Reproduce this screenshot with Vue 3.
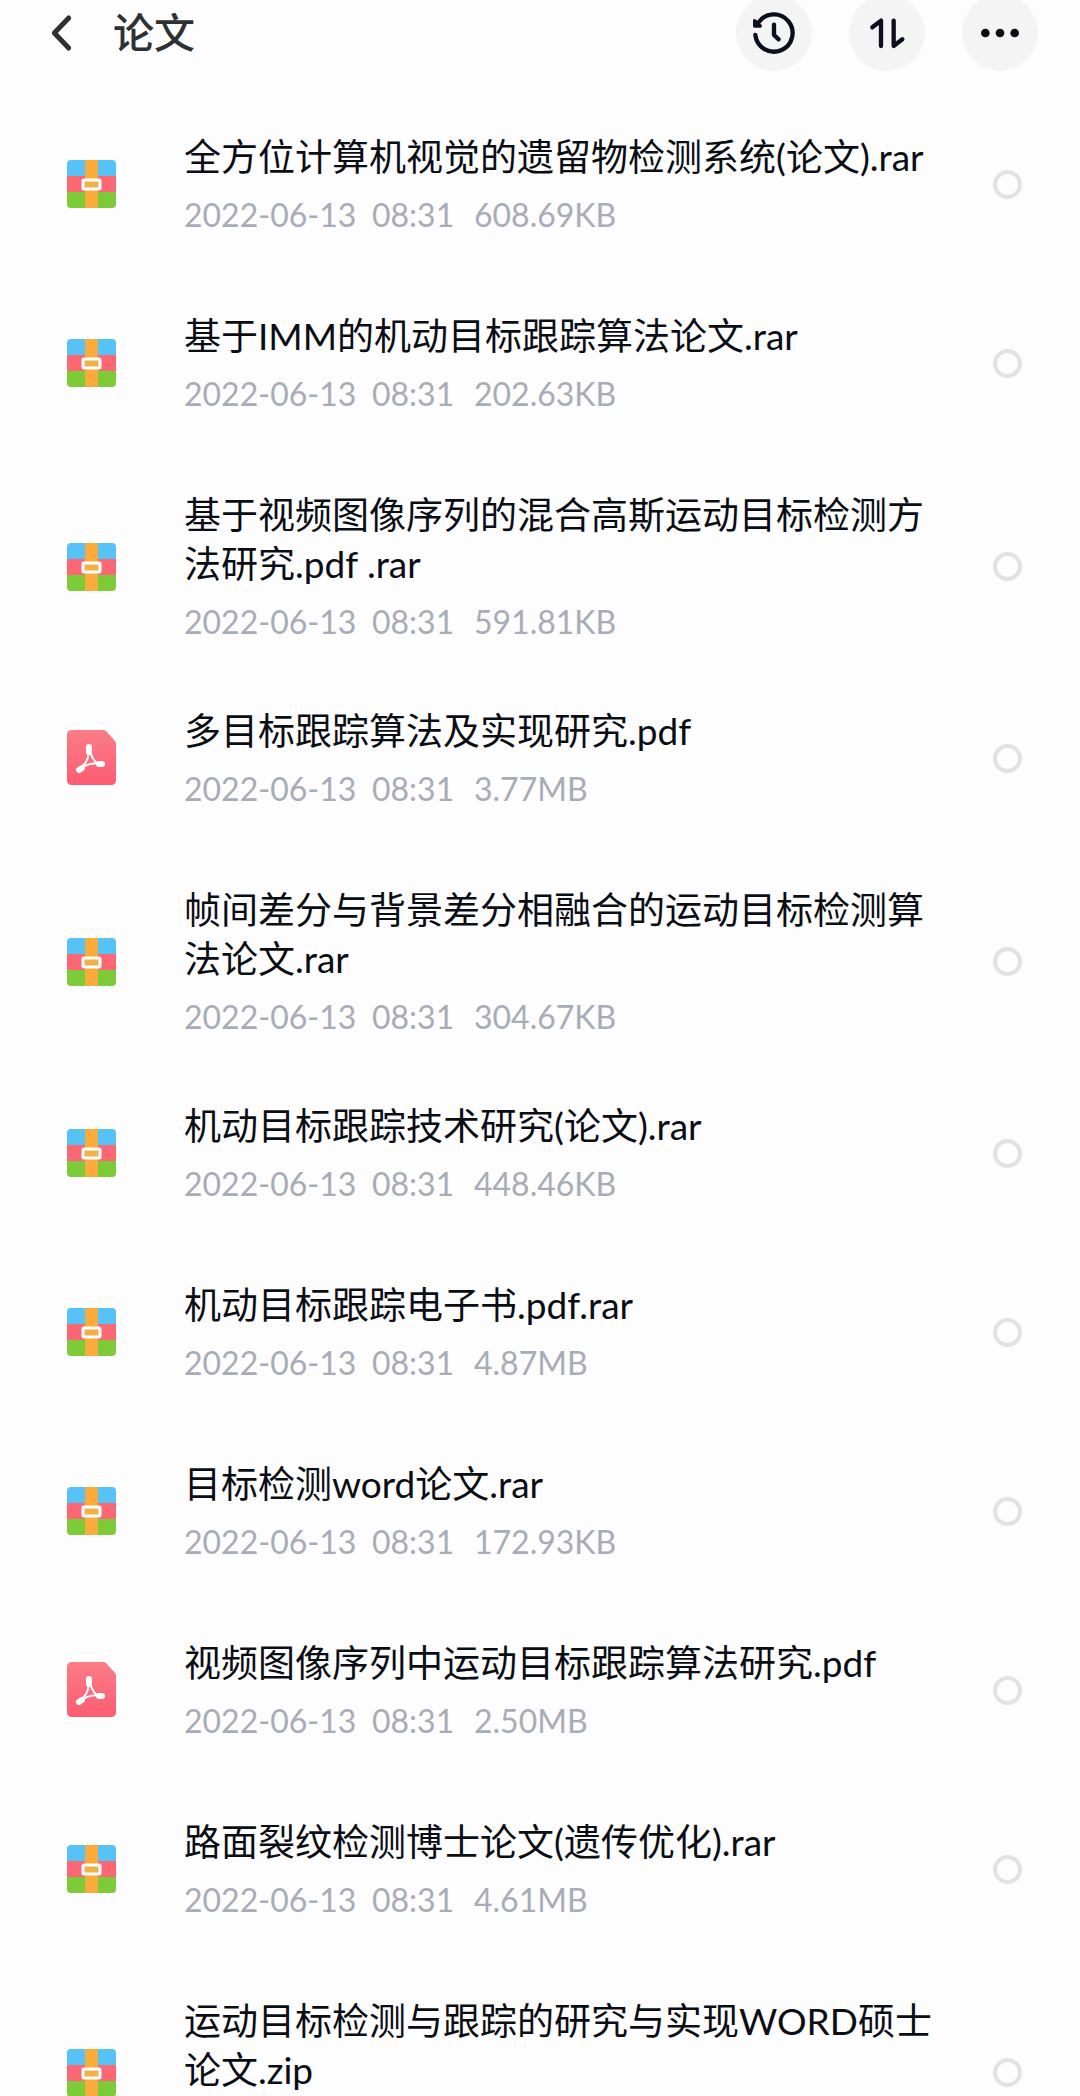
<script setup>
import { ref } from 'vue'

const files = [
  { name: '全方位计算机视觉的遗留物检测系统(论文).rar', type: 'archive', date: '2022-06-13', time: '08:31', size: '608.69KB' },
  { name: '基于IMM的机动目标跟踪算法论文.rar', type: 'archive', date: '2022-06-13', time: '08:31', size: '202.63KB' },
  { name: '基于视频图像序列的混合高斯运动目标检测方法研究.pdf .rar', type: 'archive', date: '2022-06-13', time: '08:31', size: '591.81KB' },
  { name: '多目标跟踪算法及实现研究.pdf', type: 'pdf', date: '2022-06-13', time: '08:31', size: '3.77MB' },
  { name: '帧间差分与背景差分相融合的运动目标检测算法论文.rar', type: 'archive', date: '2022-06-13', time: '08:31', size: '304.67KB' },
  { name: '机动目标跟踪技术研究(论文).rar', type: 'archive', date: '2022-06-13', time: '08:31', size: '448.46KB' },
  { name: '机动目标跟踪电子书.pdf.rar', type: 'archive', date: '2022-06-13', time: '08:31', size: '4.87MB' },
  { name: '目标检测word论文.rar', type: 'archive', date: '2022-06-13', time: '08:31', size: '172.93KB' },
  { name: '视频图像序列中运动目标跟踪算法研究.pdf', type: 'pdf', date: '2022-06-13', time: '08:31', size: '2.50MB' },
  { name: '路面裂纹检测博士论文(遗传优化).rar', type: 'archive', date: '2022-06-13', time: '08:31', size: '4.61MB' },
  { name: '运动目标检测与跟踪的研究与实现WORD硕士论文.zip', type: 'archive', date: '', time: '', size: '' },
]
const selected = ref([])
</script>

<template>
  <div class="screen">
    <header class="bar">
      <button class="back" type="button" aria-label="返回">
        <svg viewBox="150 39 72 120" width="24" height="40" fill="none" stroke="#2f3033" stroke-width="15" stroke-linecap="round" stroke-linejoin="round">
          <path d="M206 54 163 99l43 45" />
        </svg>
      </button>
      <h1>论文</h1>
      <div class="actions">
        <button class="round" type="button" aria-label="历史">
          <svg viewBox="48 -15 228 228" fill="none" stroke="#0c0f1c" stroke-width="13" stroke-linecap="round" stroke-linejoin="round">
            <path d="M106 105A56 56 0 1 0 115 68" />
            <path d="M104 62v16h17z" stroke-width="10" fill="#0c0f1c" />
            <path d="M162 74v31l14 13" />
          </svg>
        </button>
        <button class="round" type="button" aria-label="排序">
          <svg viewBox="386 -15 228 228" fill="none" stroke="#0c0f1c" stroke-width="13" stroke-linecap="round" stroke-linejoin="round">
            <path d="M456 82l26-20v76M520 62v76l26-20" />
          </svg>
        </button>
        <button class="round" type="button" aria-label="更多">
          <svg viewBox="728 -15 228 228" fill="#0c0d12">
            <circle cx="798" cy="99" r="13" />
            <circle cx="842" cy="99" r="13" />
            <circle cx="886" cy="99" r="13" />
          </svg>
        </button>
      </div>
    </header>

    <ul class="list">
      <li v-for="(file, i) in files" :key="file.name">
        <div class="row">
          <svg v-if="file.type === 'archive'" class="icon" viewBox="0 0 49 56">
            <path d="M0 20V8q0-4 4-4h41q4 0 4 4v12z" fill="#56c2f6" />
            <path d="M0 20h49v16H0z" fill="#fb6773" />
            <path d="M0 36h49v12q0 4-4 4H4q-4 0-4-4z" fill="#7dcb38" />
            <path d="M18 4h13v48H18z" fill="#f9ab3b" />
            <rect x="16" y="24" width="17" height="9" rx="1" fill="#f0b04a" stroke="#fff" stroke-width="3" />
          </svg>
          <svg v-else class="icon" viewBox="0 0 49 56">
            <defs>
              <linearGradient :id="'pdf-' + i" x1="0" y1="0" x2="0" y2="1">
                <stop offset="0" stop-color="#fa7c86" />
                <stop offset="1" stop-color="#fd5c73" />
              </linearGradient>
            </defs>
            <path d="M5 0h31q2 0 3 1l9 10q1 1 1 3v36q0 5-5 5H5q-5 0-5-5V5q0-5 5-5z" :fill="`url(#pdf-${i})`" />
            <g fill="none" stroke="#fff" stroke-width="2" stroke-linejoin="round" stroke-linecap="round">
              <path d="M22 18c-1 5 0 8-2 12-2 5-5 7-8 9M22 18c2 6 2 8 5 12 2 3 5 4 8 4M12 40c6-5 14-8 23-6" />
              <path d="M22 17v5M12 40l3-2M35 34h-3" stroke-width="6" />
            </g>
          </svg>
          <label class="text" :for="'file-' + i">
            <span class="name">{{ file.name }}</span>
            <span class="meta">
              <span>{{ file.date }}</span>
              <span>{{ file.time }}</span>
              <span>{{ file.size }}</span>
            </span>
          </label>
          <input :id="'file-' + i" v-model="selected" type="checkbox" :value="file.name" />
        </div>
      </li>
    </ul>
  </div>
</template>

<style>
body {
  margin: 0;
  background: #fdfdfd;
}
</style>

<style scoped>
.screen {
  height: 100vh;
  display: flex;
  flex-direction: column;
  overflow: hidden;
  background: #fdfdfd;
  color: #0b0d15;
  font-family: Lato, "Noto Sans CJK SC", sans-serif;
}
.bar {
  flex: none;
  display: flex;
  align-items: center;
  height: 66px;
  padding: 0 42px 0 50px;
}
button {
  padding: 0;
  border: 0;
  background: none;
  cursor: pointer;
}
.back {
  width: 24px;
  height: 40px;
}
svg {
  display: block;
}
h1 {
  margin: 0 0 0 39px;
  font-size: 41px;
  line-height: 60px;
  font-weight: 500;
  color: #2f3033;
}
.actions {
  display: flex;
  gap: 37px;
  margin-left: auto;
}
.round {
  width: 76px;
  height: 76px;
  border-radius: 50%;
  background: #f4f4f5;
}
.list {
  flex: 1;
  min-height: 0;
  margin: 0;
  padding: 27px 58px 0 67px;
  overflow-y: auto;
  scrollbar-width: none;
  list-style: none;
}
li {
  box-sizing: border-box;
  min-height: 179px;
  padding: 39px 0 24px;
}
.row {
  display: flex;
  align-items: center;
}
.icon {
  flex: none;
  width: 49px;
  height: 56px;
}
.text {
  flex: 1;
  min-width: 0;
  margin: 0 52px 0 68px;
}
.name {
  display: block;
  font-size: 37px;
  line-height: 49px;
  word-break: break-all;
}
.meta {
  display: grid;
  grid-template-columns: 188px 102px auto;
  height: 43px;
  margin-top: 12px;
  font-size: 32px;
  line-height: 43px;
  color: #a8acb7;
}
input {
  flex: none;
  appearance: none;
  width: 29px;
  height: 29px;
  margin: 0;
  border: 4px solid #e2e2e4;
  border-radius: 50%;
}
input:checked {
  border-width: 9px;
  border-color: #2f6bff;
}
</style>
